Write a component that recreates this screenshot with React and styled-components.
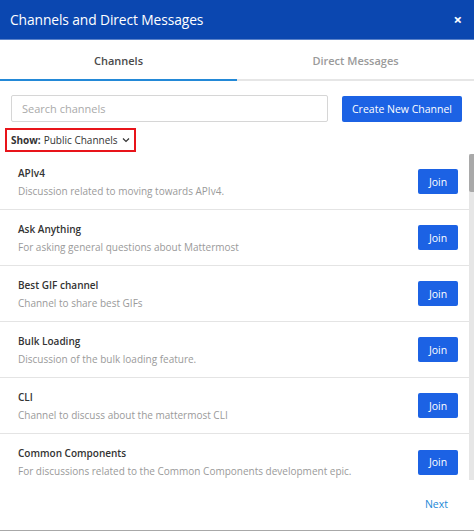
import React from 'react'
import styled, { createGlobalStyle } from 'styled-components'

const GlobalStyle = createGlobalStyle`
  html, body {
    margin: 0;
    padding: 0;
    background: #fff;
  }
  body {
    font-family: 'Open Sans', sans-serif;
    color: #3d3c40;
  }
`

const Modal = styled.div`
  width: 474px;
  height: 531px;
  display: flex;
  flex-direction: column;
  background: #fff;
  border-bottom: 1px solid #a8a8a8;
  box-sizing: border-box;
  overflow: hidden;
`

const Header = styled.div`
  height: 40px;
  flex: none;
  display: flex;
  align-items: center;
  justify-content: space-between;
  padding: 0 12px 0 10px;
  background: #0b47b0;
  color: #fff;
  border-bottom: 1px solid #5b82c9;
  box-sizing: border-box;
`

const Title = styled.h1`
  margin: 0;
  font-size: 13.8px;
  font-weight: 400;
  letter-spacing: -0.1px;
`

const Close = styled.span`
  font-size: 15px;
  font-weight: 700;
  line-height: 1;
`

const Tabs = styled.div`
  display: flex;
  flex: none;
  height: 41px;
`

const Tab = styled.div`
  flex: 1;
  display: flex;
  align-items: center;
  justify-content: center;
  font-size: 11px;
  font-weight: 600;
  color: ${p => (p.$active ? '#4a4a4a' : '#9a9a9a')};
  border-bottom: 2px solid ${p => (p.$active ? '#2389d7' : '#e6e6e6')};
  box-sizing: border-box;
  padding-top: 2px;
`

const Controls = styled.div`
  display: flex;
  align-items: center;
  gap: 14px;
  padding: 14px 12px 0 11px;
`

const Search = styled.input`
  flex: 1;
  height: 27px;
  box-sizing: border-box;
  border: 1px solid #d6d6d6;
  border-radius: 2px;
  padding: 0 10px;
  font-family: 'Open Sans', sans-serif;
  font-size: 11px;
  color: #3d3c40;
  outline: none;
  &::placeholder {
    color: #aaa;
  }
`

const PrimaryButton = styled.button`
  height: ${p => (p.$small ? '25px' : '26px')};
  border: none;
  border-radius: 2px;
  background: #1c62e4;
  color: #fff;
  font-family: 'Open Sans', sans-serif;
  font-size: 10.5px;
  padding: 0;
  width: ${p => (p.$small ? '40px' : '120px')};
  white-space: nowrap;
  cursor: pointer;
`

const ShowFilter = styled.div`
  align-self: flex-start;
  margin: 6px 0 0 5px;
  border: 2px solid #e8141a;
  height: 24px;
  box-sizing: border-box;
  display: flex;
  align-items: center;
  padding: 0 4px;
  font-size: 10px;
  color: #333;
  gap: 3px;
  strong {
    font-weight: 700;
  }
`

const ListWrap = styled.div`
  margin-top: 2px;
  height: 326px;
  flex: none;
  display: flex;
`

const List = styled.div`
  flex: 1;
  overflow: hidden;
`

const Scrollbar = styled.div`
  width: 5px;
  background: #e6e6e6;
`

const Thumb = styled.div`
  height: 38px;
  background: #a9a9a9;
  border-radius: 2px 0 0 2px;
`

const Row = styled.div`
  height: 56px;
  box-sizing: border-box;
  display: flex;
  align-items: center;
  justify-content: space-between;
  padding: 0 11px 0 18px;
  border-bottom: 1px solid #e4e4e4;
  &:last-child {
    border-bottom: none;
  }
`

const RowText = styled.div`
  display: flex;
  flex-direction: column;
  gap: 4px;
`

const RowName = styled.div`
  font-size: 10px;
  font-weight: 600;
  color: #333;
`

const RowDesc = styled.div`
  font-size: 10px;
  color: #9a9a9a;
`

const Footer = styled.div`
  flex: 1;
  display: flex;
  align-items: center;
  justify-content: flex-end;
  padding: 0 26px 2px 0;
`

const NextLink = styled.a`
  color: #2389d7;
  font-size: 10.5px;
  text-decoration: none;
`

const channels = [
  { name: 'APIv4', desc: 'Discussion related to moving towards APIv4.' },
  { name: 'Ask Anything', desc: 'For asking general questions about Mattermost' },
  { name: 'Best GIF channel', desc: 'Channel to share best GIFs' },
  { name: 'Bulk Loading', desc: 'Discussion of the bulk loading feature.' },
  { name: 'CLI', desc: 'Channel to discuss about the mattermost CLI' },
  {
    name: 'Common Components',
    desc: 'For discussions related to the Common Components development epic.',
  },
]

const Chevron = () => (
  <svg width="8" height="6" viewBox="0 0 8 6" style={{ marginLeft: 1 }}>
    <path d="M1 1.5 L4 4.5 L7 1.5" fill="none" stroke="#333" strokeWidth="1.2" />
  </svg>
)

export default function App() {
  return (
    <>
      <GlobalStyle />
      <Modal>
        <Header>
          <Title>Channels and Direct Messages</Title>
          <Close>×</Close>
        </Header>
        <Tabs>
          <Tab $active>Channels</Tab>
          <Tab>Direct Messages</Tab>
        </Tabs>
        <Controls>
          <Search placeholder="Search channels" />
          <PrimaryButton>Create New Channel</PrimaryButton>
        </Controls>
        <ShowFilter>
          <strong>Show:</strong> Public Channels <Chevron />
        </ShowFilter>
        <ListWrap>
          <List>
            {channels.map(c => (
              <Row key={c.name}>
                <RowText>
                  <RowName>{c.name}</RowName>
                  <RowDesc>{c.desc}</RowDesc>
                </RowText>
                <PrimaryButton $small>Join</PrimaryButton>
              </Row>
            ))}
          </List>
          <Scrollbar>
            <Thumb />
          </Scrollbar>
        </ListWrap>
        <Footer>
          <NextLink href="#">Next</NextLink>
        </Footer>
      </Modal>
    </>
  )
}
